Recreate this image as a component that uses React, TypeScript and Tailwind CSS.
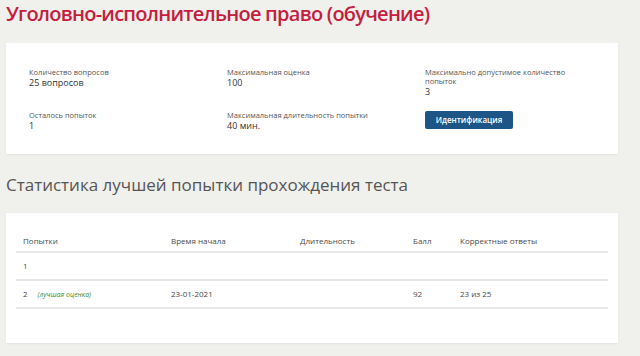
import React from 'react';

const InfoItem = ({ label, value }: { label: string; value: string }) => (
  <div>
    <div className="text-[7.5px] text-[#555] leading-[9px]">{label}</div>
    <div className="text-[9px] font-medium text-[#333] leading-[11px]">{value}</div>
  </div>
);

const App = () => {
  const rows = [
    { n: '1', best: false, start: '', dur: '', score: '', correct: '' },
    { n: '2', best: true, start: '23-01-2021', dur: '', score: '92', correct: '23 из 25' },
  ];

  return (
    <div
      className="w-[640px] h-[356px] overflow-hidden bg-[#f0f0ec] px-[6px] pt-[1px]"
      style={{ fontFamily: '"Open Sans", "Noto Sans", sans-serif' }}
    >
      <h1 className="text-[20px] font-semibold tracking-[-0.75px] text-[#c41e3e] leading-[26px]">
        Уголовно-исполнительное право (обучение)
      </h1>

      <div className="mt-[16px] w-[612px] h-[111px] bg-white shadow-[0_1px_2px_rgba(0,0,0,0.06)] pl-[23px] pt-[25px]">
        <div className="grid grid-cols-[198px_198px_170px] gap-y-[14px]">
          <InfoItem label="Количество вопросов" value="25 вопросов" />
          <InfoItem label="Максимальная оценка" value="100" />
          <InfoItem label="Максимально допустимое количество попыток" value="3" />
          <InfoItem label="Осталось попыток" value="1" />
          <InfoItem label="Максимальная длительность попытки" value="40 мин." />
          <div>
            <button className="block w-[88px] h-[18px] rounded-[2px] bg-[#1d5587] text-white text-[8px] font-semibold">
              Идентификация
            </button>
          </div>
        </div>
      </div>

      <h2 className="mt-[20px] text-[17px] text-[#555] leading-[22px]">
        Статистика лучшей попытки прохождения теста
      </h2>

      <div className="mt-[17px] w-[612px] h-[130px] bg-white shadow-[0_1px_2px_rgba(0,0,0,0.06)] px-[10px] pt-[18px]">
        <div className="text-[8px] text-[#4a4a4a]">
          <div className="grid grid-cols-[148px_129px_113px_47px_1fr] h-[22px] items-center border-b-2 border-[#e8e8e6] pl-[7px]">
            <span>Попытки</span>
            <span>Время начала</span>
            <span>Длительность</span>
            <span>Балл</span>
            <span>Корректные ответы</span>
          </div>
          {rows.map((r) => (
            <div
              key={r.n}
              className="grid grid-cols-[148px_129px_113px_47px_1fr] h-[28px] items-center border-b-2 border-[#e8e8e6] pl-[7px]"
            >
              <span>
                {r.n}
                {r.best && <span className="ml-[10px] italic text-[7px] text-[#3a8a3a]">(лучшая оценка)</span>}
              </span>
              <span>{r.start}</span>
              <span>{r.dur}</span>
              <span>{r.score}</span>
              <span>{r.correct}</span>
            </div>
          ))}
        </div>
      </div>
    </div>
  );
};

export default App;
